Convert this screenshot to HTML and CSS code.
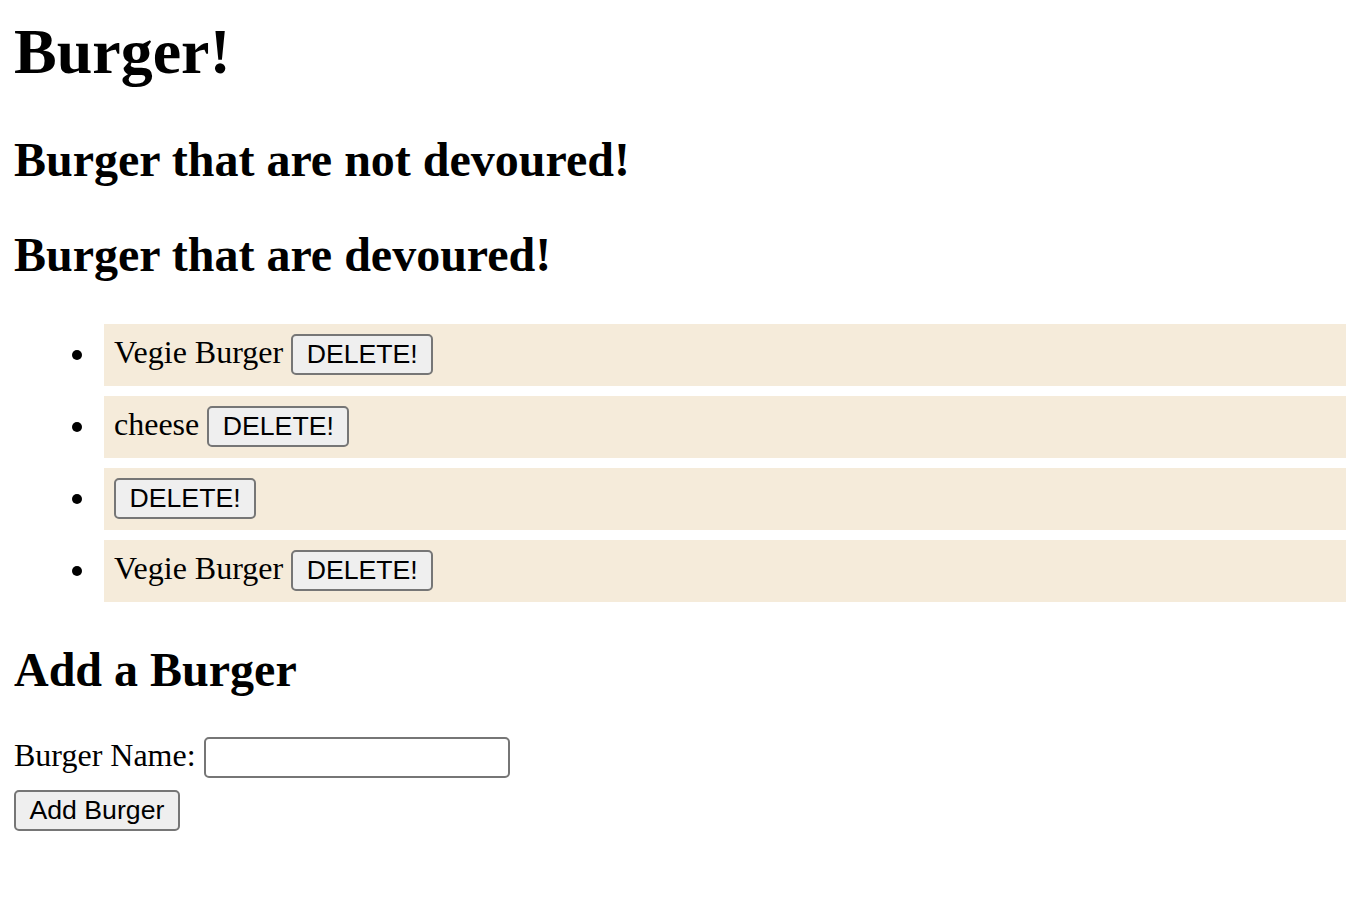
FILE: index.html
```html
<!DOCTYPE html>
<html lang="en">
<head>
<meta charset="utf-8">
<title>Burger!</title>
<link rel="stylesheet" href="styles.css">
</head>
<body>
  <h1 class="title">Burger!</h1>
  <h2 class="section-title">Burger that are not devoured!</h2>
  <h2 class="section-title">Burger that are devoured!</h2>
  <ul class="burger-list">
    <li class="burger-item">Vegie Burger <button class="btn">DELETE!</button></li>
    <li class="burger-item">cheese <button class="btn">DELETE!</button></li>
    <li class="burger-item"><button class="btn">DELETE!</button></li>
    <li class="burger-item">Vegie Burger <button class="btn">DELETE!</button></li>
  </ul>
  <h2 class="section-title add-title">Add a Burger</h2>
  <form class="add-form">
    <div class="field">
      <label class="field-label" for="burger">Burger Name:</label>
      <input class="field-input" id="burger" type="text">
    </div>
    <button class="btn btn-add" type="button">Add Burger</button>
  </form>
</body>
</html>
```

FILE: styles.css
```css
html, body {
  background: #ffffff;
}

body {
  margin: 0;
  padding: 0 0 0 14px;
  font-family: "Liberation Serif", "Times New Roman", serif;
  font-size: 32px;
  color: #000000;
}

.title {
  font-size: 64px;
  font-weight: bold;
  margin: 15px 0 43px;
}

.section-title {
  font-size: 48px;
  font-weight: bold;
  margin: 40px 0;
}

.burger-list {
  margin: 42px 0 40px;
  padding-left: 90px;
  list-style: none;
}

.burger-item {
  position: relative;
  background: #f5ebda;
  padding: 10px 10px 11px;
  margin-bottom: 10px;
}

.burger-item::before {
  content: "";
  position: absolute;
  left: -32px;
  top: 50%;
  width: 10px;
  height: 10px;
  margin-top: -5px;
  border-radius: 50%;
  background: #000000;
}

.btn {
  font-family: "Liberation Sans", Arial, sans-serif;
  font-size: 26.67px;
  color: #000000;
  background: #efefef;
  border: 2px solid #767676;
  border-radius: 5px;
  padding: 0 13.5px;
  height: 41px;
  line-height: 37px;
  vertical-align: baseline;
}

.add-form {
  margin: 0;
}

.field {
  margin-top: 0;
}

.field-input {
  width: 306px;
  height: 41px;
  box-sizing: border-box;
  border: 2px solid #767676;
  border-radius: 5px;
  padding: 2px 4px;
  font-size: 26.67px;
  font-family: "Liberation Sans", Arial, sans-serif;
  vertical-align: baseline;
}

.btn-add {
  margin-top: 12px;
}
```
